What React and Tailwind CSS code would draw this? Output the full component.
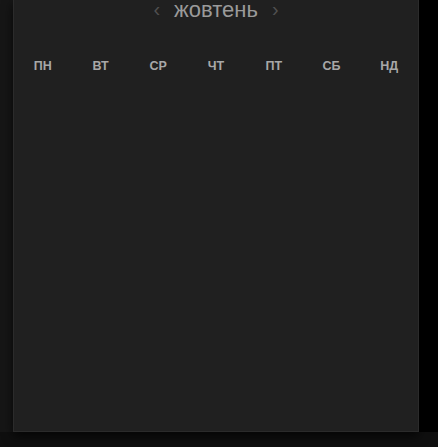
import React from 'react';

const days = ['пн', 'вт', 'ср', 'чт', 'пт', 'сб', 'нд'];

const App = () => {
  return (
    <div className="w-[438px] h-[447px] overflow-hidden bg-[#0e0e0e] flex flex-col font-['Liberation_Sans',Arial,sans-serif]">
      <div className="flex h-[432px]">
        <div className="w-[13px] bg-[#161616]" />
        <div className="w-[406px] bg-[#202020] border-x border-b border-[#2b2b2b] shadow-[0_4px_10px_rgba(0,0,0,0.7)] flex flex-col relative z-10">
          {/* Month switcher */}
          <div className="flex items-start justify-center gap-[14px] h-[20px]">
            <button className="text-[#505050] text-[20px] leading-[18px]">‹</button>
            <span className="text-[22px] leading-[20px] text-[#9a9a9a]">жовтень</span>
            <button className="text-[#505050] text-[20px] leading-[18px]">›</button>
          </div>

          {/* Weekdays */}
          <div className="grid grid-cols-7 mt-[40px]">
            {days.map((d) => (
              <div key={d} className="text-center text-[12.5px] font-bold uppercase text-[#a8a8a8] leading-none">
                {d}
              </div>
            ))}
          </div>

          <div className="flex-1" />
        </div>
        <div className="flex-1 bg-black" />
      </div>
      <div className="flex-1 bg-[#0f0f0f]" />
    </div>
  );
};

export default App;
